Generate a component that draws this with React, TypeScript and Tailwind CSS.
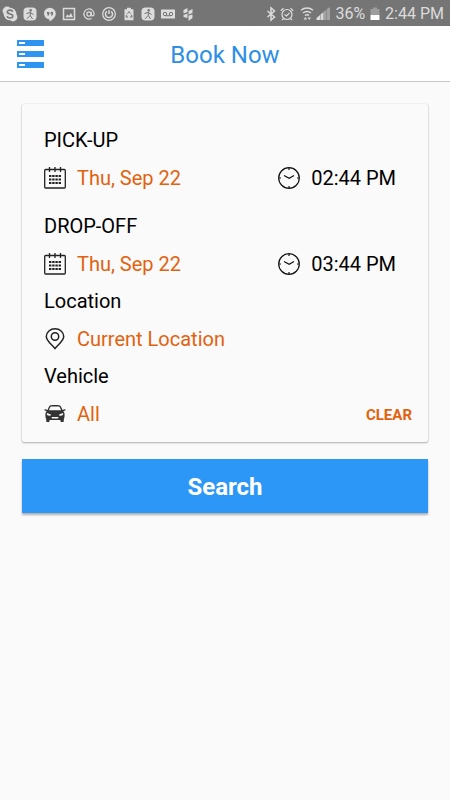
import React from 'react';

type IconProps = { className?: string };

export default function App() {
    return (
        <div className="min-h-screen bg-[#fafafa] font-[Roboto,sans-serif] text-black">
            <StatusBar />

            <header className="grid grid-cols-[1fr_auto_1fr] items-center h-14 px-4 bg-white border-b border-[#c8c8c8]">
                <button aria-label="Menu" className="justify-self-start">
                    <MenuIcon className="w-7 h-7" />
                </button>
                <h1 className="pt-0.5 text-2xl text-[#2e8fe6]">Book Now</h1>
            </header>

            <main className="px-[22px] pt-[22px]">
                {/* Booking card */}
                <section className="rounded-xs pt-[17px] pb-[10px] pl-[22px] pr-4 shadow-[0_1px_2px_rgba(0,0,0,0.3),0_0_1px_rgba(0,0,0,0.2)]">
                    <TripTime id="pickup" label="PICK-UP" date="Thu, Sep 22" time="02:44 PM" />
                    <div className="h-[11px]" />
                    <TripTime id="dropoff" label="DROP-OFF" date="Thu, Sep 22" time="03:44 PM" />

                    <FieldLabel id="location">Location</FieldLabel>
                    <div className="flex items-center h-[37px]">
                        <FieldButton labelledBy="location" icon={PinIcon} value="Current Location" accent />
                    </div>

                    <FieldLabel id="vehicle">Vehicle</FieldLabel>
                    <div className="flex items-center justify-between h-[37px]">
                        <FieldButton labelledBy="vehicle" icon={CarIcon} value="All" accent />
                        <button className="pt-1 text-[15px] font-bold text-[#e2620e]">CLEAR</button>
                    </div>
                </section>

                <button className="mt-[17px] pt-0.5 w-full h-[54px] bg-[#2d97f8] text-2xl font-bold text-white shadow-[0_2px_2px_rgba(0,0,0,0.3)]">
                    Search
                </button>
            </main>
        </div>
    );
}

function TripTime({ id, label, date, time }: { id: string; label: string; date: string; time: string }) {
    return (
        <>
            <FieldLabel id={id}>{label}</FieldLabel>
            <div className="flex items-center justify-between h-[37px] pr-4">
                <FieldButton labelledBy={id} icon={CalendarIcon} value={date} accent />
                <FieldButton labelledBy={id} icon={ClockIcon} value={time} />
            </div>
        </>
    );
}

function FieldLabel({ id, children }: { id: string; children: React.ReactNode }) {
    return (
        <h2 id={id} className="text-xl leading-[38px]">
            {children}
        </h2>
    );
}

function FieldButton({ labelledBy, icon: Icon, value, accent }: {
    labelledBy: string;
    icon: React.ElementType;
    value: string;
    accent?: boolean;
}) {
    const valueId = `${labelledBy}-${accent ? 'value' : 'time'}`;

    return (
        <button aria-labelledby={`${labelledBy} ${valueId}`} className="flex items-center gap-[11px] text-xl">
            <Icon className="w-[22px] h-[22px]" />
            <span id={valueId} className={accent ? 'text-[#e2620e]' : 'text-black'}>{value}</span>
        </button>
    );
}

function StatusBar() {
    return (
        <div className="flex items-center justify-between h-[26px] pt-0.5 pl-0.5 pr-1.5 bg-[#757575] text-[#dcdcdc]">
            <div className="flex items-center justify-between w-[194px]">
                {/* Skype */}
                <StatusIcon>
                    <circle cx="8" cy="8" r="6.3" fill="currentColor" />
                    <circle cx="5" cy="5" r="4.4" fill="currentColor" />
                    <circle cx="11" cy="11" r="4.4" fill="currentColor" />
                    <path d="M10.8 5.6C10.2 4.5 9.2 4.1 8 4.1c-1.6 0-2.7.7-2.7 1.9 0 2.6 5.5 1.3 5.5 4 0 1.2-1.2 2-2.8 2-1.4 0-2.5-.6-3-1.8" stroke="#757575" strokeWidth="1.6" />
                </StatusIcon>
                <WalkerIcon />
                {/* Hangouts */}
                <StatusIcon>
                    <path d="M8 1.8a5.8 5.8 0 0 0-.5 11.6v2.1c3.6-1.7 6.3-4.5 6.3-7.9A5.8 5.8 0 0 0 8 1.8Z" fill="currentColor" />
                    <path d="M5 6h2.3v2.4L6.2 9.8h-.8L6 8.3H5ZM8.7 6H11v2.4L9.9 9.8h-.8l.6-1.5h-1Z" fill="#757575" />
                </StatusIcon>
                {/* Picture */}
                <StatusIcon>
                    <rect x="2.5" y="2.5" width="11" height="11" stroke="currentColor" strokeWidth="1.5" />
                    <path d="m4.500 11.300 2-3 1.500 1.600 2-2.900 2 4.300Z" fill="currentColor" />
                </StatusIcon>
                {/* Mail */}
                <StatusIcon>
                    <circle cx="8" cy="8" r="2.1" stroke="currentColor" strokeWidth="1.2" />
                    <path d="M10.200 5.700v3.300c0 1.500 2.900 1.200 2.900-1A5.100 5.100 0 1 0 10.600 12.400" stroke="currentColor" strokeWidth="1.2" />
                </StatusIcon>
                {/* Power */}
                <StatusIcon>
                    <circle cx="8" cy="8" r="6.3" stroke="currentColor" strokeWidth="1.3" />
                    <path d="M8 4.200V8M5.900 5.300a3.500 3.500 0 1 0 4.200 0" stroke="currentColor" strokeWidth="1.500" />
                </StatusIcon>
                {/* Battery saver */}
                <StatusIcon>
                    <path d="M6 1.800h4v1.500h2.500v11h-9v-11H6Z" fill="currentColor" />
                    <path d="m6.500 7.600 1.500-2 1.500 2M10.500 8.700l.6 2.300H9M7 11H5l.6-2.300" stroke="#757575" />
                </StatusIcon>
                <WalkerIcon />
                {/* Voicemail */}
                <StatusIcon>
                    <rect x="1" y="3.5" width="14" height="9" rx="0.5" fill="currentColor" />
                    <circle cx="5" cy="8" r="1.7" stroke="#757575" />
                    <circle cx="11" cy="8" r="1.7" stroke="#757575" />
                    <path d="M5 9.700h6" stroke="#757575" />
                </StatusIcon>
                {/* Folded tiles */}
                <StatusIcon>
                    <path d="m3.500 4 4-2v4l-4 1.500ZM3.500 9l4-1.500v4.500l-4-1ZM8.500 5l4-2v4l-4 1.500ZM8.500 9.500l4-1v3.500l-4 3Z" fill="currentColor" />
                </StatusIcon>
            </div>

            <div className="flex items-center">
                {/* Bluetooth */}
                <StatusIcon>
                    <path d="m4.500 5 7 6L8 14V2l3.500 3-7 6" stroke="currentColor" strokeWidth="1.500" />
                </StatusIcon>
                {/* Alarm */}
                <StatusIcon>
                    <circle cx="8" cy="8.5" r="5" stroke="currentColor" strokeWidth="1.2" />
                    <path d="M5.500 8.500 7.500 10l3-3.200M1.800 4.800l2.700-2.500M14.200 4.800l-2.700-2.500M4.500 12.500 3 14.200M11.500 12.500l1.500 1.700" stroke="currentColor" strokeWidth="1.2" />
                </StatusIcon>
                {/* Wifi */}
                <StatusIcon className="w-4 h-4 ml-1">
                    <path d="M2 4.300c3.500-3 8.500-3 12 0M4 7c2.500-2 5.500-2 8 0M6 9.500c1.300-1 2.700-1 4 0" stroke="currentColor" strokeWidth="1.500" />
                    <path d="m4.500 13.500 2-2.500 1.500 2.500ZM8.500 11.500H12l-1.800 2.500Z" fill="currentColor" />
                </StatusIcon>
                {/* Signal */}
                <StatusIcon className="w-4 h-4 mr-1">
                    <path d="M1.500 14v-2L5 9v5ZM5.500 14V8.500L8.500 6v8Z" fill="currentColor" />
                    <path d="M9 14V5.500L11.500 3.500V14ZM12 14V3l3-2v13Z" fill="#a3a3a3" />
                </StatusIcon>
                <span className="text-base leading-5">36%</span>
                {/* Battery */}
                <StatusIcon className="w-4 h-4 ml-0.5">
                    <path d="M6 1.500h4V3h2.500v6h-9V3H6Z" fill="#9d9d9d" />
                    <path d="M3.500 9h9v5h-9Z" fill="#fff" />
                </StatusIcon>
                <span className="ml-0.5 text-base leading-5">2:44 PM</span>
            </div>
        </div>
    );
}

function StatusIcon({ className = 'w-4 h-4', children }: { className?: string; children: React.ReactNode }) {
    return (
        <svg viewBox="0 0 16 16" fill="none" className={className} aria-hidden="true">
            {children}
        </svg>
    );
}

function WalkerIcon() {
    return (
        <StatusIcon>
            <rect x="1.5" y="1.5" width="13" height="13" rx="4" fill="currentColor" />
            <circle cx="8.7" cy="4.2" r="1.2" fill="#757575" />
            <path d="M8.300 5.500v4l2.200 3.500M8.300 9.300 5 12.800M4.500 7.500l3.500-1 3.500 2" stroke="#757575" />
        </StatusIcon>
    );
}

function MenuIcon({ className }: IconProps) {
    return (
        <svg viewBox="0 0 28 28" className={className} aria-hidden="true">
            <path d="M1 0h27v6H1ZM1 11h27v6H1ZM1 22h27v6H1Z" fill="#2d94f0" />
            <path d="M3 2h6v2H3ZM3 13h6v2H3ZM3 24h6v2H3Z" fill="#fff" />
        </svg>
    );
}

function CalendarIcon({ className }: IconProps) {
    return (
        <svg viewBox="0 0 22 22" fill="none" stroke="#222" className={className} aria-hidden="true">
            <rect x="0.7" y="2.5" width="20.6" height="18.5" rx="1" strokeWidth="1.3" />
            <path d="M5.500 0v5M11 0v5M16.500 0v5" strokeWidth="1.3" />
            <path d="M5 9h12M5 12.500h12M5 16h12" strokeWidth="2" strokeDasharray="2.4 0.8" />
        </svg>
    );
}

function ClockIcon({ className }: IconProps) {
    return (
        <svg viewBox="0 0 22 22" fill="none" stroke="#111" strokeWidth="1.2" className={className} aria-hidden="true">
            <circle cx="11" cy="11" r="10.3" />
            <path d="M11 1v2M11 19v2M1 11h2M19 11h2" />
            <path d="m6 8.500 5.200 2.800L16 8.500" />
        </svg>
    );
}

function PinIcon({ className }: IconProps) {
    return (
        <svg viewBox="0 0 22 22" fill="none" stroke="#222" strokeWidth="1.5" className={className} aria-hidden="true">
            <path d="M11 20.500C8 16.500 2.300 13.200 2.300 8.600 2.300 4 6.300.8 11 .8s8.700 3.200 8.700 7.800c0 4.600-5.700 7.900-8.700 11.900Z" />
            <circle cx="11" cy="8.5" r="3.7" />
        </svg>
    );
}

function CarIcon({ className }: IconProps) {
    return (
        <svg viewBox="0 0 22 22" className={className} aria-hidden="true">
            <path d="M6.500 2.300C8 1.900 14 1.900 15.500 2.300c1.200.4 2 2.200 3 4.700l2.200-.8c1-.2 1.300 1 .4 1.300l-1.800.7c1 1 1.300 2 1.300 3.500 0 2-.2 3.300-.8 4.300v2c0 .8-.4 1-1 1h-1.300c-.7 0-1-.3-1-1v-1H5.500v1c0 .7-.3 1-1 1H3.200c-.6 0-1-.2-1-1v-2c-.6-1-.8-2.300-.8-4.300 0-1.500.3-2.500 1.300-3.500l-1.800-.7c-.9-.3-.6-1.500.4-1.300l2.200.8c1-2.500 1.800-4.300 3-4.700Z" fill="#333" />
            <path d="M7 3.600c1.500-.3 6.500-.3 8 0 .8.300 1.300 1.600 2 3.600H5c.7-2 1.200-3.300 2-3.600ZM2.800 10l3.700 1.200c.6.400.4 1.500-.2 1.600l-2.300-.3c-.9-.3-1.200-1.200-1.200-2.500ZM19.200 10l-3.700 1.200c-.6.400-.4 1.500.2 1.600l2.300-.3c.9-.3 1.200-1.200 1.200-2.500ZM7.500 14h7l-.5 1.500H8Z" fill="#fafafa" />
        </svg>
    );
}
